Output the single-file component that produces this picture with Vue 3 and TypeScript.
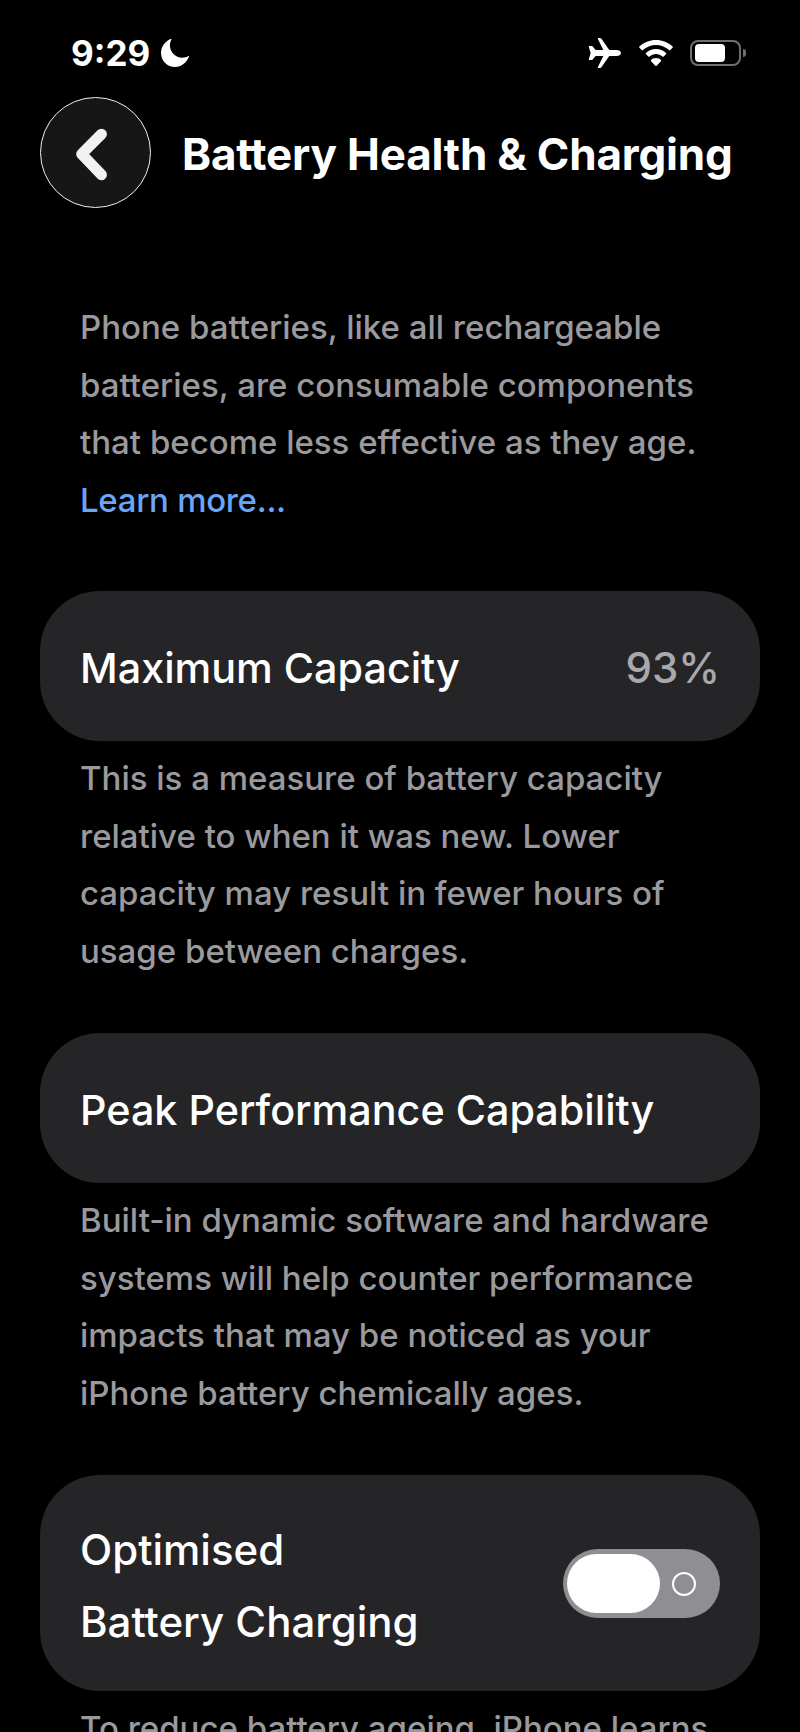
<script setup lang="ts">
const intro = [
  'Phone batteries, like all rechargeable',
  'batteries, are consumable components',
  'that become less effective as they age.',
]

const capacityNote = [
  'This is a measure of battery capacity',
  'relative to when it was new. Lower',
  'capacity may result in fewer hours of',
  'usage between charges.',
]

const peakNote = [
  'Built-in dynamic software and hardware',
  'systems will help counter performance',
  'impacts that may be noticed as your',
  'iPhone battery chemically ages.',
]
</script>

<template>
  <div class="screen">
    <!-- Status bar -->
    <div class="status-bar">
      <div class="status-left">
        <span class="time">9:29</span>
        <svg class="moon" viewBox="0 0 28 28" width="28" height="28">
          <path fill="#fff" d="M10.5 0.4C9.4 2.2 8.9 4.2 8.9 6.3c0 6.9 5.6 12.4 12.4 12.4 2.2 0 4.4-.6 6.2-1.7.4-.2.7.1.5.5C25.6 23.8 20.400 28 14.100 28 6.300 28 0 21.700 0 13.900 0 7.700 4 2.400 9.900-.2c.4-.2.8.200.6.600z" />
        </svg>
      </div>
      <div class="status-right">
        <svg class="plane" viewBox="0 0 34 30" width="34" height="30">
          <path fill="#fff" d="M33 15c0-1.900-2.200-3-4.400-3h-7.300L13.400.800C13.100.300 12.600 0 12 0h-1.600c-.4 0-.7.400-.6.800L15.300 12H7.600L4.500 8.300C4.300 8.100 4 8 3.700 8H1.300c-.4 0-.6.300-.5.700L2.600 15 .8 21.300c-.1.400.1.700.5.700h2.400c.3 0 .6-.1.800-.3L7.600 18h7.700L9.800 29.200c-.1.400.2.800.6.800H12c.6 0 1.100-.3 1.400-.8L21.300 18h7.300C30.800 18 33 16.900 33 15z" />
        </svg>
        <svg class="wifi" viewBox="0 0 34 26" width="34" height="26">
          <path fill="#fff" d="M17 0C10.600 0 4.800 2.500.4 6.500c-.4.400-.4.900 0 1.300l2.200 2.300c.3.400.9.400 1.300 0C7.300 7 12 5 17 5s9.700 2 13.100 5.100c.4.400 1 .4 1.300 0l2.200-2.300c.4-.4.4-.9 0-1.300C29.200 2.500 23.400 0 17 0z" />
          <path fill="#fff" d="M17 9c-3.800 0-7.300 1.500-10 3.900-.4.400-.4.900 0 1.300l2.300 2.300c.3.400.9.400 1.300.100C12.300 15 14.600 14 17 14s4.700 1 6.400 2.600c.4.300 1 .3 1.300-.1l2.300-2.300c.4-.4.4-.9 0-1.300C24.300 10.500 20.800 9 17 9z" />
          <path fill="#fff" d="M17 18c-1.900 0-3.600.7-4.900 1.900-.4.400-.4.900 0 1.300l4.200 4.500c.4.400 1 .4 1.400 0l4.200-4.500c.4-.4.400-.9 0-1.300C20.600 18.700 18.900 18 17 18z" />
        </svg>
        <div class="battery">
          <div class="battery-body"><div class="battery-fill"></div></div>
          <div class="battery-nub"></div>
        </div>
      </div>
    </div>

    <!-- Header -->
    <div class="header">
      <div class="back">
        <svg viewBox="0 0 110 110" width="110" height="110">
          <path d="M61 36 L41 56 L61 77" fill="none" stroke="#f2f2f2" stroke-width="11" stroke-linecap="round" stroke-linejoin="round" />
        </svg>
      </div>
      <div class="title">Battery Health &amp; Charging</div>
    </div>

    <div class="note intro">
      <div v-for="line in intro" :key="line">{{ line }}</div>
      <div class="link">Learn more...</div>
    </div>

    <div class="card">
      <span class="label">Maximum Capacity</span>
      <span class="label value">93%</span>
    </div>
    <div class="note">
      <div v-for="line in capacityNote" :key="line">{{ line }}</div>
    </div>

    <div class="card">
      <span class="label">Peak Performance Capability</span>
    </div>
    <div class="note">
      <div v-for="line in peakNote" :key="line">{{ line }}</div>
    </div>

    <div class="card card-tall">
      <div class="two-line">
        <div>Optimised</div>
        <div>Battery Charging</div>
      </div>
      <div class="toggle">
        <div class="thumb"></div>
        <div class="off-mark"></div>
      </div>
    </div>
    <div class="note">
      <div>To reduce battery ageing, iPhone learns</div>
    </div>
  </div>
</template>

<style>
html,
body {
  margin: 0;
  background: #000;
}
</style>

<style scoped>
.screen {
  width: 800px;
  height: 1732px;
  overflow: hidden;
  background: #000;
  color: #fff;
  font-family: Inter, "Liberation Sans", sans-serif;
  box-sizing: border-box;
  padding: 0 40px;
}

.status-bar {
  display: flex;
  justify-content: space-between;
  align-items: center;
  height: 30px;
  padding: 38px 14px 0 31px;
}

.status-left,
.status-right {
  display: flex;
  align-items: center;
}

.time {
  font-size: 35px;
  font-weight: 700;
  line-height: 30px;
}

.moon {
  margin-left: 11px;
}

.plane {
  margin-right: 17px;
}

.wifi {
  margin-right: 17px;
}

.battery {
  display: flex;
  align-items: center;
  width: 56px;
}

.battery-body {
  box-sizing: border-box;
  width: 51px;
  height: 26px;
  border: 2px solid #6f6f6f;
  border-radius: 8px;
  padding: 2px 3px;
}

.battery-fill {
  width: 30px;
  height: 18px;
  background: #fff;
  border-radius: 4px;
}

.battery-nub {
  width: 3px;
  height: 8px;
  margin-left: 2px;
  background: #6f6f6f;
  border-radius: 0 3px 3px 0;
}

.header {
  display: flex;
  align-items: center;
  gap: 31px;
  margin-top: 29px;
}

.back {
  box-sizing: border-box;
  display: flex;
  align-items: center;
  justify-content: center;
  width: 111px;
  height: 111px;
  border: 1.5px solid #f0f0f0;
  border-radius: 50%;
  background: #161616;
  flex-shrink: 0;
}

.title {
  padding-top: 3px;
  font-size: 44px;
  font-weight: 700;
  letter-spacing: -0.2px;
}

.note {
  padding: 9px 40px 0;
  color: #9a9a9e;
  font-size: 33px;
  font-weight: 500;
  line-height: 57.5px;
  margin-bottom: 53px;
}

.intro {
  padding-top: 0;
  margin-top: 91px;
  margin-bottom: 62px;
}

.link {
  color: #6aa5f8;
  letter-spacing: -0.3px;
}

.card {
  box-sizing: border-box;
  display: flex;
  align-items: center;
  justify-content: space-between;
  height: 150px;
  padding: 0 40px;
  background: #252527;
  border-radius: 60px;
  font-size: 41.3px;
  font-weight: 500;
}

.label {
  padding-top: 3px;
}

.value {
  color: #a8a8ad;
  font-size: 42px;
}

.card-tall {
  height: 216px;
}

.two-line {
  padding-top: 5px;
  font-size: 42px;
  line-height: 72px;
}

.toggle {
  position: relative;
  width: 157px;
  height: 69px;
  background: #8e8e93;
  border-radius: 35px;
}

.thumb {
  position: absolute;
  left: 4px;
  top: 5px;
  width: 93px;
  height: 59px;
  background: #fff;
  border-radius: 30px;
}

.off-mark {
  position: absolute;
  left: 109px;
  top: 23px;
  box-sizing: border-box;
  width: 24px;
  height: 24px;
  border: 2.500px solid #fff;
  border-radius: 50%;
}
</style>
